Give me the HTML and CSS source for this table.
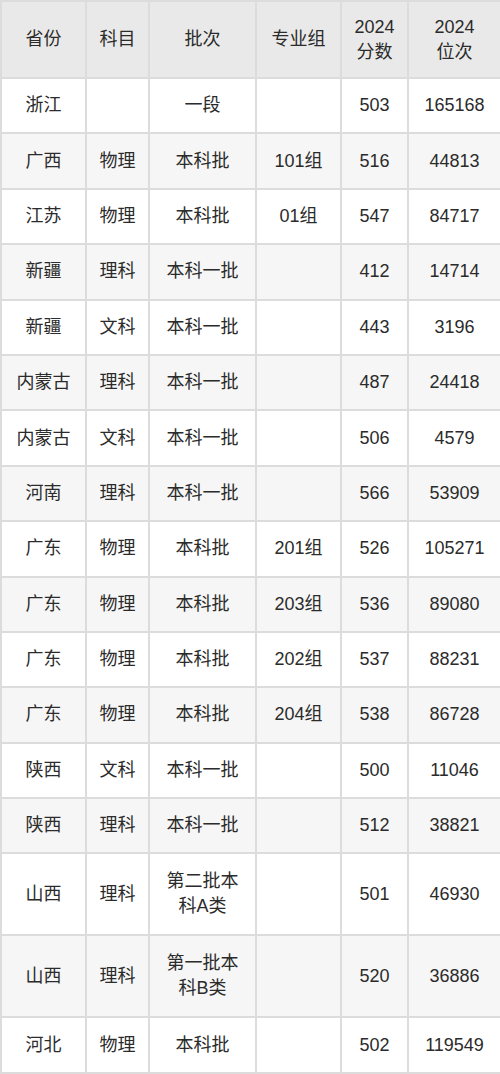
FILE: index.html
```html
<!DOCTYPE html>
<html lang="zh">
<head>
<meta charset="utf-8">
<link rel="stylesheet" href="styles.css">
</head>
<body>
<table class="score-table">
  <colgroup>
    <col class="c1"><col class="c2"><col class="c3"><col class="c4"><col class="c5"><col class="c6">
  </colgroup>
  <thead>
    <tr><th>省份</th><th>科目</th><th>批次</th><th>专业组</th><th>2024<br>分数</th><th>2024<br>位次</th></tr>
  </thead>
  <tbody>
    <tr><td>浙江</td><td></td><td>一段</td><td></td><td>503</td><td>165168</td></tr>
    <tr><td>广西</td><td>物理</td><td>本科批</td><td>101组</td><td>516</td><td>44813</td></tr>
    <tr><td>江苏</td><td>物理</td><td>本科批</td><td>01组</td><td>547</td><td>84717</td></tr>
    <tr><td>新疆</td><td>理科</td><td>本科一批</td><td></td><td>412</td><td>14714</td></tr>
    <tr><td>新疆</td><td>文科</td><td>本科一批</td><td></td><td>443</td><td>3196</td></tr>
    <tr><td>内蒙古</td><td>理科</td><td>本科一批</td><td></td><td>487</td><td>24418</td></tr>
    <tr><td>内蒙古</td><td>文科</td><td>本科一批</td><td></td><td>506</td><td>4579</td></tr>
    <tr><td>河南</td><td>理科</td><td>本科一批</td><td></td><td>566</td><td>53909</td></tr>
    <tr><td>广东</td><td>物理</td><td>本科批</td><td>201组</td><td>526</td><td>105271</td></tr>
    <tr><td>广东</td><td>物理</td><td>本科批</td><td>203组</td><td>536</td><td>89080</td></tr>
    <tr><td>广东</td><td>物理</td><td>本科批</td><td>202组</td><td>537</td><td>88231</td></tr>
    <tr><td>广东</td><td>物理</td><td>本科批</td><td>204组</td><td>538</td><td>86728</td></tr>
    <tr><td>陕西</td><td>文科</td><td>本科一批</td><td></td><td>500</td><td>11046</td></tr>
    <tr><td>陕西</td><td>理科</td><td>本科一批</td><td></td><td>512</td><td>38821</td></tr>
    <tr class="tall"><td>山西</td><td>理科</td><td>第二批本科A类</td><td></td><td>501</td><td>46930</td></tr>
    <tr class="tall"><td>山西</td><td>理科</td><td>第一批本科B类</td><td></td><td>520</td><td>36886</td></tr>
    <tr><td>河北</td><td>物理</td><td>本科批</td><td></td><td>502</td><td>119549</td></tr>
  </tbody>
</table>
</body>
</html>
```
FILE: styles.css
```css
html, body {
  margin: 0;
  padding: 0;
  background: #ffffff;
}
.score-table {
  width: 500px;
  border-collapse: collapse;
  table-layout: fixed;
  font-family: "Liberation Sans", "Noto Sans CJK SC", sans-serif;
  font-size: 18px;
  line-height: 25px;
  color: #2b2b2b;
}
.c1 { width: 85px; }
.c2 { width: 63px; }
.c3 { width: 107px; }
.c4 { width: 85px; }
.c5 { width: 67px; }
.c6 { width: 93px; }
.score-table th,
.score-table td {
  border: 2px solid #dcdcdc;
  padding: 0 10px;
  text-align: center;
  vertical-align: middle;
  font-weight: normal;
  height: 55.4px;
  box-sizing: border-box;
}
.score-table th {
  background: #e9e9e9;
  height: 77px;
}
.score-table tbody tr:nth-child(even) td {
  background: #f6f6f6;
}
.score-table tr.tall td {
  height: 82px;
}
```
